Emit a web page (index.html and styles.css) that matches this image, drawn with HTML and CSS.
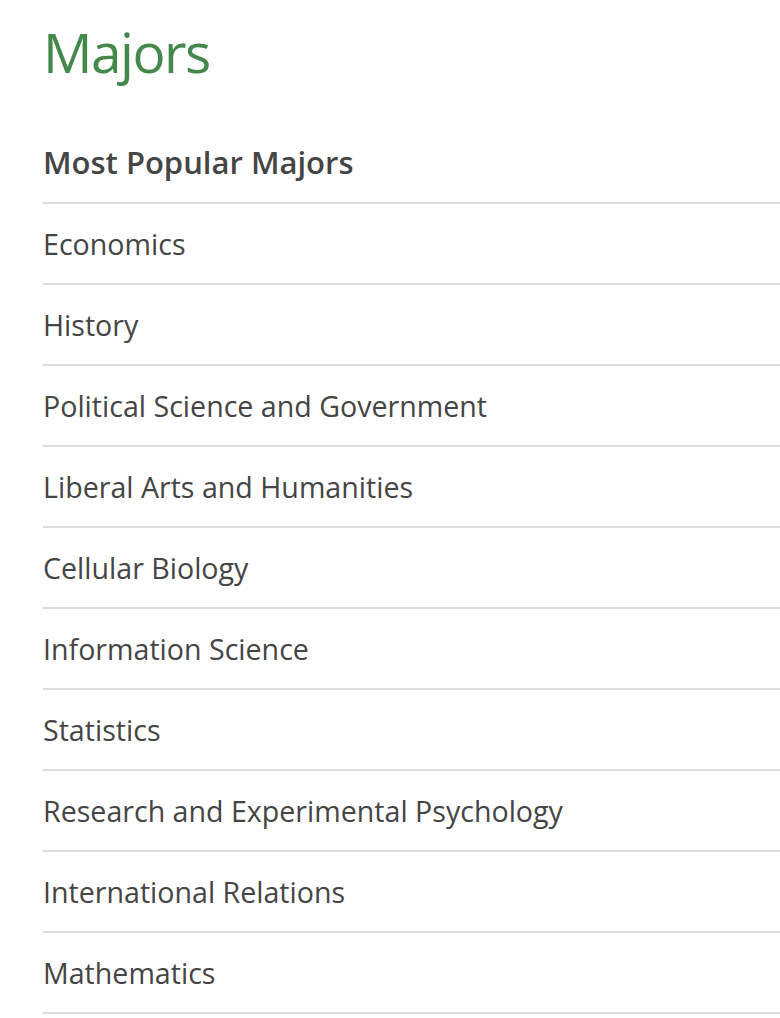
FILE: index.html
```html
<!DOCTYPE html>
<html>
<head>
<meta charset="utf-8">
<link rel="stylesheet" href="styles.css">
</head>
<body>
<main class="page">
  <h1 class="title">Majors</h1>
  <h2 class="subtitle">Most Popular Majors</h2>
  <ul class="list">
    <li class="item">Economics</li>
    <li class="item">History</li>
    <li class="item">Political Science and Government</li>
    <li class="item">Liberal Arts and Humanities</li>
    <li class="item">Cellular Biology</li>
    <li class="item">Information Science</li>
    <li class="item">Statistics</li>
    <li class="item">Research and Experimental Psychology</li>
    <li class="item">International Relations</li>
    <li class="item">Mathematics</li>
  </ul>
</main>
</body>
</html>
```

FILE: styles.css
```css
html, body {
  margin: 0;
  padding: 0;
  background: #fff;
}
body {
  font-family: "Open Sans", Lato, sans-serif;
  color: #454545;
  overflow: hidden;
}
.page {
  padding-left: 43px;
}
.title {
  margin: 0;
  padding-top: 13px;
  font-size: 55px;
  line-height: 78px;
  font-weight: 400;
  letter-spacing: -1.5px;
  color: #44894b;
}
.subtitle {
  margin: 0;
  padding-top: 50px;
  padding-bottom: 19px;
  font-size: 31px;
  line-height: 42px;
  font-weight: 600;
  color: #454545;
}
.list {
  list-style: none;
  margin: 0;
  padding: 0;
  border-top: 2px solid #dcdcdc;
}
.item {
  height: 79px;
  display: flex;
  align-items: center;
  font-size: 28.6px;
  border-bottom: 2px solid #dcdcdc;
}
```
